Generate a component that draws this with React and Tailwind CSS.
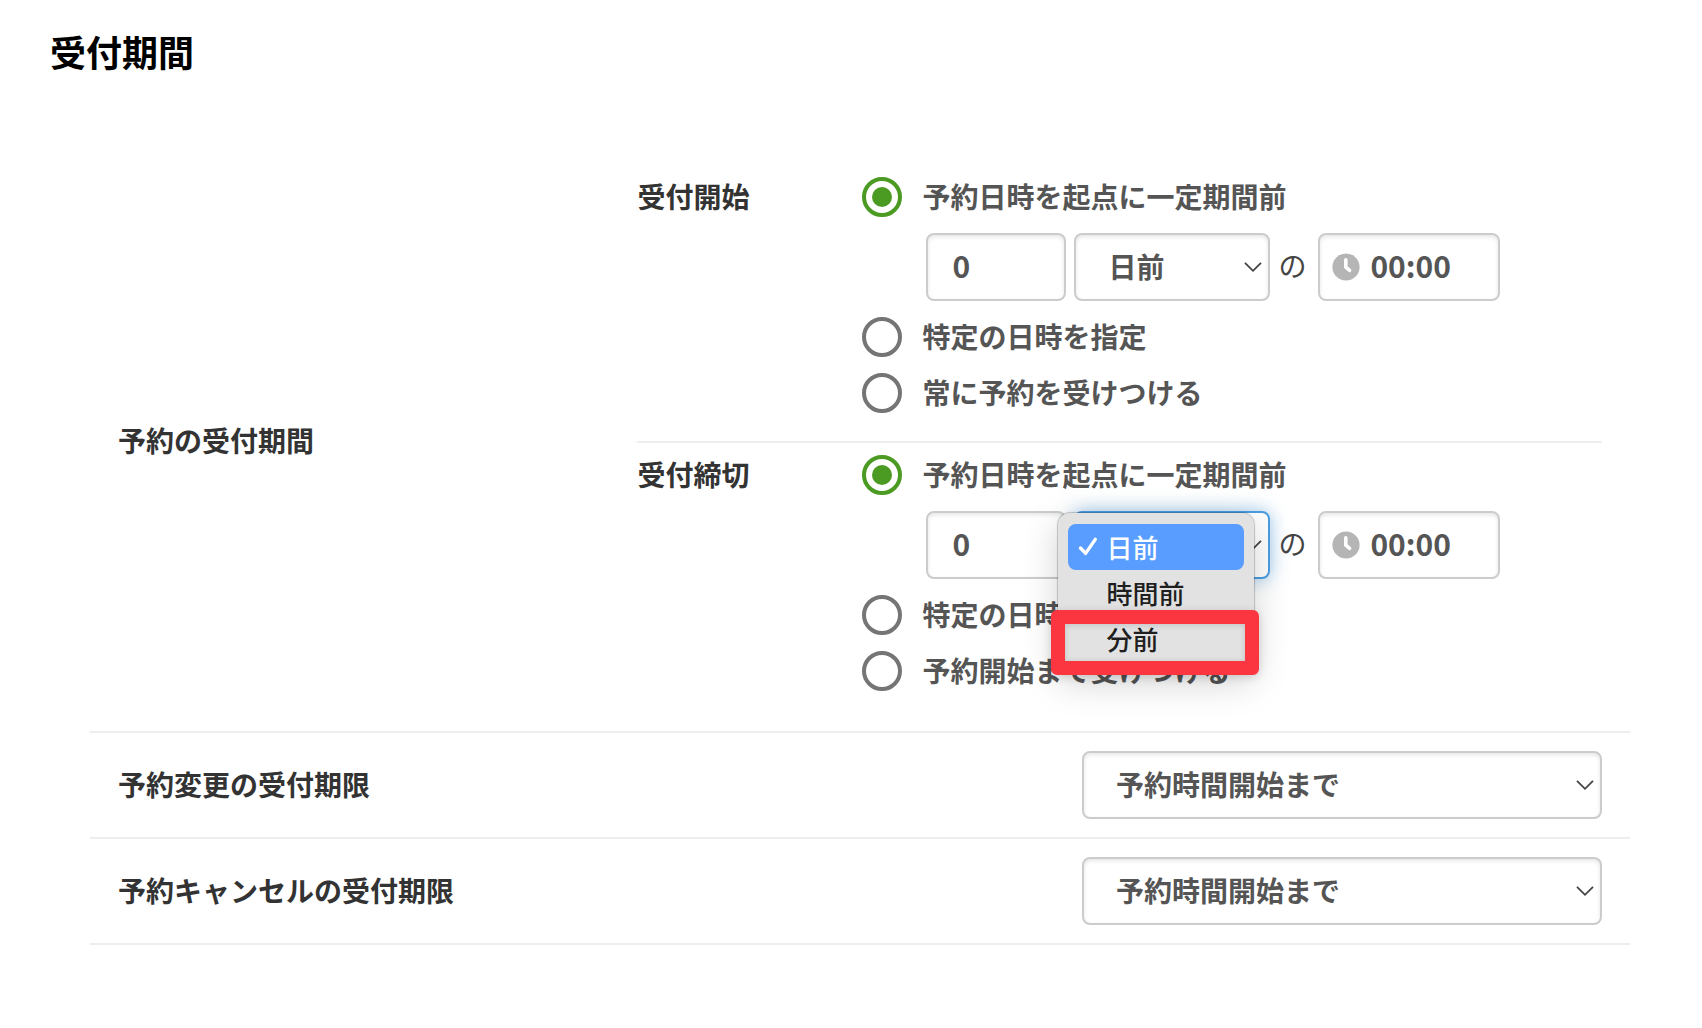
import { useState } from 'react';

const UNITS = ['日前', '時間前', '分前'];

const LIMITS = [
  { id: 'change-limit', label: '予約変更の受付期限' },
  { id: 'cancel-limit', label: '予約キャンセルの受付期限' },
];

const fieldClass = 'h-[68px] rounded-lg border-2 bg-white font-bold text-[#555555] outline-none';
const idleClass = 'border-[#cccccc] shadow-[inset_0_2px_4px_rgba(0,0,0,0.1)]';
const focusClass = 'border-[#4d9de0] shadow-[0_0_18px_rgba(77,157,224,0.55)]';

const Chevron = () => (
  <svg
    className="pointer-events-none absolute top-1/2 right-2 -mt-1.5 h-3 w-[18px]"
    viewBox="0 0 18 12"
    fill="none"
    stroke="#444"
    strokeWidth="1.8"
    aria-hidden="true"
  >
    <path d="M1 1.8 L9 9.8 L17 1.8" />
  </svg>
);

const ClockIcon = () => (
  <svg className="h-7 w-7 shrink-0" viewBox="0 0 28 28" aria-hidden="true">
    <circle cx="14" cy="14" r="13.6" fill="#b5b5b5" />
    <path
      d="M13.8 6.8 V14.2 L17.6 17.4"
      fill="none"
      stroke="#fff"
      strokeWidth="3.6"
      strokeLinecap="round"
      strokeLinejoin="round"
    />
  </svg>
);

const CheckIcon = () => (
  <svg
    className="h-5 w-5"
    viewBox="0 0 20 20"
    fill="none"
    stroke="#fff"
    strokeWidth="3.4"
    strokeLinecap="round"
    strokeLinejoin="round"
    aria-hidden="true"
  >
    <path d="M2.5 11 L7.6 16.4 L17.3 2.4" />
  </svg>
);

const RadioRow = ({ name, label, checked, onChange }) => (
  <label className="flex h-14 items-center gap-5 text-[#555555]">
    <input
      type="radio"
      name={name}
      checked={checked}
      onChange={onChange}
      className="grid h-10 w-10 shrink-0 appearance-none place-content-center rounded-full border-4 border-[#757575] bg-white before:h-5 before:w-5 before:rounded-full checked:border-[#4b9a22] checked:before:bg-[#4b9a22]"
    />
    <span className="pb-0.5">{label}</span>
  </label>
);

const UnitMenu = ({ value, onSelect }) => (
  <div
    role="listbox"
    aria-label="単位"
    className="absolute top-[2px] right-4 z-10 w-[196px] rounded-xl bg-[#e2e2e2] px-2.5 pt-[11px] pb-2.5 shadow-[0_0_1px_1px_rgba(0,0,0,0.2),0_10px_36px_rgba(0,0,0,0.18)]"
  >
    {UNITS.map((unit) => (
      <button
        key={unit}
        type="button"
        role="option"
        aria-selected={unit === value}
        onClick={() => onSelect(unit)}
        className={`flex h-[46px] w-full items-center gap-2 rounded-lg pl-2.5 text-[26px] font-medium ${
          unit === value ? 'bg-[#589dff] text-white' : 'text-[#1f1f1f]'
        }`}
      >
        <span className="w-5">{unit === value && <CheckIcon />}</span>
        <span>{unit}</span>
      </button>
    ))}
    {/* marker around the last option */}
    <div className="pointer-events-none absolute -right-[5px] -bottom-[3px] -left-[7px] h-[65px] rounded-md border-[14px] border-[#fb3640] shadow-[0_2px_10px_rgba(0,0,0,0.15),inset_0_1px_6px_rgba(0,0,0,0.15)]" />
  </div>
);

const OffsetFields = ({ id, menuOpen }) => {
  const [amount, setAmount] = useState('0');
  const [unit, setUnit] = useState('日前');
  const [time, setTime] = useState('00:00');
  const [open, setOpen] = useState(menuOpen);

  return (
    <div className="my-2 ml-16 flex items-center">
      <input
        type="text"
        aria-label="期間"
        value={amount}
        onChange={(e) => setAmount(e.target.value)}
        className={`${fieldClass} ${idleClass} mr-2 w-[140px] px-6 pb-1 text-[30px]`}
      />
      <div className="relative">
        <select
          id={`${id}-unit`}
          aria-label="単位"
          value={unit}
          onChange={(e) => setUnit(e.target.value)}
          className={`${fieldClass} ${open ? focusClass : idleClass} w-[196px] appearance-none px-8 pb-0.5`}
        >
          {UNITS.map((item) => (
            <option key={item}>{item}</option>
          ))}
        </select>
        <Chevron />
        {open && (
          <UnitMenu
            value={unit}
            onSelect={(item) => {
              setUnit(item);
              setOpen(false);
            }}
          />
        )}
      </div>
      <span className="mr-3 ml-2 pb-1 font-normal text-[#444444]">の</span>
      <div className={`${fieldClass} ${idleClass} flex w-[182px] items-center gap-2.5 pl-3`}>
        <ClockIcon />
        <input
          type="text"
          aria-label="時刻"
          value={time}
          onChange={(e) => setTime(e.target.value)}
          className="w-full min-w-0 bg-transparent pb-1 text-[30px] outline-none"
        />
      </div>
    </div>
  );
};

const PeriodGroup = ({ id, title, options, menuOpen = false }) => {
  const [selected, setSelected] = useState(0);

  return (
    <div role="radiogroup" aria-label={title} className="flex">
      <div className="flex h-14 w-[225px] shrink-0 items-center pb-0.5">{title}</div>
      <div>
        {options.map((option, i) => (
          <div key={option}>
            <RadioRow
              name={id}
              label={option}
              checked={selected === i}
              onChange={() => setSelected(i)}
            />
            {i === 0 && <OffsetFields id={id} menuOpen={menuOpen} />}
          </div>
        ))}
      </div>
    </div>
  );
};

const LimitRow = ({ id, label }) => (
  <div className="flex items-center justify-between border-b-2 border-[#eeeeee] px-7 py-[18px]">
    <label htmlFor={id} className="pb-0.5">
      {label}
    </label>
    <div className="relative w-[520px]">
      <select id={id} className={`${fieldClass} ${idleClass} w-full appearance-none px-8 pb-0.5`}>
        <option>予約時間開始まで</option>
      </select>
      <Chevron />
    </div>
  </div>
);

const App = () => (
  <main className="min-h-screen bg-white pt-[31px] font-['Noto_Sans_CJK_JP',sans-serif] text-[28px] leading-10 font-bold text-[#333333]">
    <h1 className="pl-[50px] text-4xl leading-10 text-black">受付期間</h1>

    <section className="mt-20 mr-[72px] ml-[90px]">
      <div className="flex items-center justify-between border-b-2 border-[#eeeeee] px-7 py-[18px]">
        <h2 className="pb-0.5">予約の受付期間</h2>
        <div className="w-[65%]">
          <div className="mb-1 border-b-2 border-[#eeeeee] pb-5">
            <PeriodGroup
              id="start"
              title="受付開始"
              options={['予約日時を起点に一定期間前', '特定の日時を指定', '常に予約を受けつける']}
            />
          </div>
          <div className="pb-3.5">
            <PeriodGroup
              id="deadline"
              title="受付締切"
              options={['予約日時を起点に一定期間前', '特定の日時を指定', '予約開始まで受けつける']}
              menuOpen
            />
          </div>
        </div>
      </div>
      {LIMITS.map((item) => (
        <LimitRow key={item.id} {...item} />
      ))}
    </section>
  </main>
);

export default App;
